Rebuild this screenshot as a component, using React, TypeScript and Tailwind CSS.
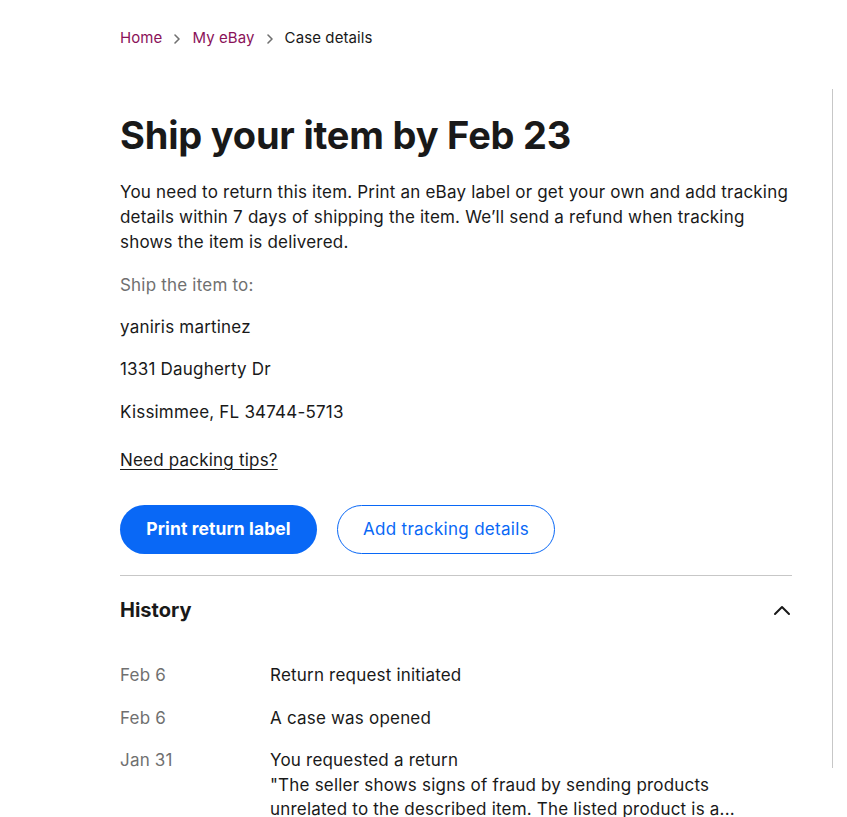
import React from "react";

function Chevron() {
  return (
    <svg width="12" height="12" viewBox="0 0 12 12" className="mx-[9px] mt-[1px]">
      <path d="M4 2l4 4-4 4" fill="none" stroke="#707070" strokeWidth="1.6" strokeLinecap="round" strokeLinejoin="round" />
    </svg>
  );
}

export default function App() {
  const font = { fontFamily: "Inter, 'Open Sans', Arial, sans-serif" };
  return (
    <div className="min-h-[817px] bg-white text-[#191919]" style={font}>
      <div className="pl-[120px] pt-[27px]">
        <nav className="flex items-center text-[15px] leading-[22px] tracking-[0.1px]">
          <span className="text-[#8a1259]">Home</span>
          <Chevron />
          <span className="text-[#8a1259]">My eBay</span>
          <Chevron />
          <span className="text-[#191919]">Case details</span>
        </nav>
        <div className="flex mt-[40px]">
          <main className="w-[672px] pt-[24px]">
            <h1 className="text-[38px] leading-[44px] font-bold tracking-[-0.2px]">Ship your item by Feb 23</h1>
            <p className="mt-[23px] text-[17px] leading-[25px] tracking-[0.2px]">
              You need to return this item. Print an eBay label or get your own and add tracking details within 7 days of shipping the item. We’ll send a refund when tracking shows the item is delivered.
            </p>
            <div className="mt-[18px] text-[17px] leading-[24px] tracking-[0.2px]">
              <p className="text-[#707070]">Ship the item to:</p>
              <p className="mt-[18px]">yaniris martinez</p>
              <p className="mt-[18px]">1331 Daugherty Dr</p>
              <p className="mt-[19px]">Kissimmee, FL 34744-5713</p>
              <p className="mt-[24px] underline underline-offset-[3px]">Need packing tips?</p>
            </div>
            <div className="flex gap-[20px] mt-[33px]">
              <button className="h-[49px] w-[197px] rounded-full bg-[#0968f6] text-white text-[17.5px] font-bold tracking-[0.1px]">Print return label</button>
              <button className="h-[49px] w-[218px] rounded-full border border-[#0968f6] text-[#0968f6] text-[17px] tracking-[0.3px]">Add tracking details</button>
            </div>
            <div className="mt-[21px] border-t border-[#c7c7c7]" />
            <div className="flex items-center justify-between pt-[20px] pb-[18px]">
              <h2 className="text-[20px] leading-[28px] font-bold">History</h2>
              <svg width="20" height="20" viewBox="0 0 20 20" className="-mr-[0px]">
                <path d="M3 14l7-7 7 7" fill="none" stroke="#191919" strokeWidth="2" strokeLinecap="round" strokeLinejoin="round" />
              </svg>
            </div>
            <div className="mt-[21px] text-[17px] leading-[24.5px] tracking-[0.2px] flex flex-col gap-[18px]">
              <div className="flex">
                <span className="w-[150px] text-[#707070]">Feb 6</span>
                <span>Return request initiated</span>
              </div>
              <div className="flex">
                <span className="w-[150px] text-[#707070]">Feb 6</span>
                <span>A case was opened</span>
              </div>
              <div className="flex">
                <span className="w-[150px] shrink-0 text-[#707070]">Jan 31</span>
                <div className="w-[480px]">
                  <p>You requested a return</p>
                  <p>"The seller shows signs of fraud by sending products unrelated to the described item. The listed product is a...</p>
                </div>
              </div>
            </div>
          </main>
          <div className="ml-[40px] h-[679px] border-l border-[#c7c7c7]" />
        </div>
      </div>
    </div>
  );
}
